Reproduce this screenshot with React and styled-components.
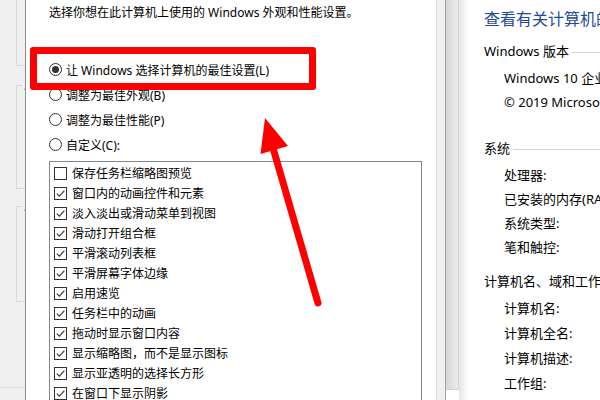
import React from "react"
import styled, { createGlobalStyle } from "styled-components"

const GlobalStyle = createGlobalStyle`
  html, body {
    margin: 0;
    padding: 0;
    background: #ffffff;
    overflow: hidden;
  }
  body {
    font-family: "Noto Sans", "Noto Sans CJK SC", sans-serif;
    font-size: 12px;
    color: #000;
  }
`

const Screen = styled.div`
  position: relative;
  display: flex;
  width: 600px;
  height: 400px;
  overflow: hidden;
`

/* window behind the dialog, only a sliver shows */
const BackPane = styled.div`
  width: 26px;
  flex: none;
  background: #f0f0f0;
  border-right: 1px solid #8c8c8c;
  padding-left: 16px;
  box-sizing: border-box;
  display: flex;
  flex-direction: column;
  overflow: hidden;
`

const GhostGroup = styled.div`
  position: relative;
  flex: none;
  margin-top: ${p => p.$top}px;
  height: ${p => p.$height}px;
  border: 1px solid #d9d9d9;
  border-right: none;
  border-top-color: ${p => (p.$open ? "transparent" : "#d9d9d9")};
  box-sizing: border-box;
`

const GhostLegend = styled.span`
  position: absolute;
  top: -9px;
  left: 5px;
  padding: 0 2px;
  background: #f0f0f0;
  line-height: 16px;
  color: #222;
`

const GhostRule = styled.div`
  margin-top: 85px;
  margin-left: -16px;
  height: 0;
  border-top: 1px solid #dcdcdc;
`

const Dialog = styled.div`
  width: 410px;
  flex: none;
  background: #fff;
  padding-left: 23px;
  box-sizing: border-box;
`

const Intro = styled.p`
  margin: 0;
  padding-top: 4px;
  line-height: 18px;
  white-space: nowrap;
`

const RadioList = styled.div`
  margin-top: 35px;
  display: flex;
  flex-direction: column;
`

const RadioRow = styled.label`
  display: flex;
  align-items: center;
  gap: 4px;
  height: 25px;
  white-space: nowrap;
`

const RadioDot = styled.span`
  width: 13px;
  height: 13px;
  border: 1px solid #333;
  border-radius: 50%;
  box-sizing: border-box;
  display: flex;
  align-items: center;
  justify-content: center;
  &::after {
    content: "";
    width: 7px;
    height: 7px;
    border-radius: 50%;
    background: ${p => (p.$checked ? "#333" : "transparent")};
  }
`

const ListBox = styled.div`
  margin-top: 4px;
  width: 373px;
  height: 260px;
  border: 1px solid #828790;
  box-sizing: border-box;
  padding: 1px 0 0 4px;
`

const CheckRow = styled.div`
  display: flex;
  align-items: center;
  gap: 5px;
  height: 20px;
  white-space: nowrap;
`

const CheckBox = styled.span`
  width: 13px;
  height: 13px;
  border: 1px solid #333;
  box-sizing: border-box;
  display: flex;
  align-items: center;
  justify-content: center;
`

const Strip = styled.div`
  flex: none;
  width: ${p => p.$width}px;
  background: ${p => p.$bg};
  border-left: ${p => (p.$left ? `1px solid ${p.$left}` : "none")};
  border-right: ${p => (p.$right ? `1px solid ${p.$right}` : "none")};
  border-bottom: ${p => (p.$bottom ? `1px solid ${p.$bottom}` : "none")};
  height: ${p => p.$height || 400}px;
  box-sizing: content-box;
`

const SystemPane = styled.div`
  flex: 1;
  background: #fff;
  padding-left: 16px;
  overflow: hidden;
  white-space: nowrap;
`

const Title = styled.h1`
  margin: 0;
  padding-top: 8px;
  font-size: 16px;
  font-weight: normal;
  line-height: 22px;
  color: #1d4a9c;
`

const SectionHead = styled.div`
  display: flex;
  align-items: center;
  gap: 3px;
  margin-top: ${p => p.$top}px;
  font-size: 13px;
  line-height: 20px;
  &::after {
    content: "";
    flex: 1;
    margin-top: 3px;
    border-top: 1px solid #d5d5d5;
  }
`

const InfoList = styled.div`
  margin-top: 5px;
  padding-left: 20px;
  display: flex;
  flex-direction: column;
`

const InfoRow = styled.div`
  height: ${p => p.$pitch}px;
  line-height: ${p => p.$pitch}px;
  font-size: 13px;
`

const RedBox = styled.div`
  position: absolute;
  left: 30px;
  top: 47px;
  width: 286px;
  height: 43px;
  border: 7px solid #ff0000;
  border-radius: 3px;
  box-sizing: border-box;
`

const ArrowLayer = styled.svg`
  position: absolute;
  left: 0;
  top: 0;
  pointer-events: none;
`

const Check = () => (
  <svg width="11" height="11" viewBox="0 0 11 11">
    <path d="M1.8 5.6 L4.4 8.2 L9.4 2.6" fill="none" stroke="#333" strokeWidth="1.1" />
  </svg>
)

const radios = [
  { label: "让 Windows 选择计算机的最佳设置(L)", checked: true },
  { label: "调整为最佳外观(B)" },
  { label: "调整为最佳性能(P)" },
  { label: "自定义(C):" },
]

const effects = [
  ["保存任务栏缩略图预览", false],
  ["窗口内的动画控件和元素", true],
  ["淡入淡出或滑动菜单到视图", true],
  ["滑动打开组合框", true],
  ["平滑滚动列表框", true],
  ["平滑屏幕字体边缘", true],
  ["启用速览", true],
  ["任务栏中的动画", true],
  ["拖动时显示窗口内容", true],
  ["显示缩略图，而不是显示图标", true],
  ["显示亚透明的选择长方形", true],
  ["在窗口下显示阴影", true],
]

const sections = [
  { head: "Windows 版本", top: 11, pitch: 24, rows: ["Windows 10 企业版", "© 2019 Microsoft Corporation。保留所有权利。"] },
  { head: "系统", top: 24, pitch: 24, rows: ["处理器:", "已安装的内存(RAM):", "系统类型:", "笔和触控:"] },
  { head: "计算机名、域和工作组设置", top: 12, pitch: 25, rows: ["计算机名:", "计算机全名:", "计算机描述:", "工作组:"] },
]

const App = () => (
  <Screen>
    <GlobalStyle />
    <BackPane>
      <GhostGroup $top={-2} $height={68} $open />
      <GhostGroup $top={19} $height={104}>
        <GhostLegend>用</GhostLegend>
      </GhostGroup>
      <GhostGroup $top={17} $height={96}>
        <GhostLegend>用</GhostLegend>
      </GhostGroup>
      <GhostRule />
    </BackPane>

    <Dialog>
      <Intro>选择你想在此计算机上使用的 Windows 外观和性能设置。</Intro>
      <RadioList>
        {radios.map(r => (
          <RadioRow key={r.label}>
            <RadioDot $checked={r.checked} />
            {r.label}
          </RadioRow>
        ))}
      </RadioList>
      <ListBox>
        {effects.map(([label, on]) => (
          <CheckRow key={label}>
            <CheckBox>{on && <Check />}</CheckBox>
            {label}
          </CheckRow>
        ))}
      </ListBox>
    </Dialog>

    <Strip $width={8} $bg="#f0f0f0" $left="#dadada" $right="#a3a3a3" />
    <Strip $width={12} $height={389} $bg="linear-gradient(to right, #d6d6d6, #ececec)" $right="#d2d2d2" $bottom="#d2d2d2" />
    <Strip $width={9} $bg="linear-gradient(to right, #e6e6e6, #fbfbfb)" />

    <SystemPane>
      <Title>查看有关计算机的基本信息</Title>
      {sections.map(s => (
        <React.Fragment key={s.head}>
          <SectionHead $top={s.top}>{s.head}</SectionHead>
          <InfoList>
            {s.rows.map(row => (
              <InfoRow key={row} $pitch={s.pitch}>{row}</InfoRow>
            ))}
          </InfoList>
        </React.Fragment>
      ))}
    </SystemPane>

    {/* red annotation drawn over the screenshot */}
    <RedBox />
    <ArrowLayer width="600" height="400" viewBox="0 0 600 400">
      <line x1="318" y1="303" x2="273" y2="148" stroke="#ff0000" strokeWidth="7" strokeLinecap="round" />
      <polygon points="265,118 260.5,154 288,146" fill="#ff0000" />
    </ArrowLayer>
  </Screen>
)

export default App
